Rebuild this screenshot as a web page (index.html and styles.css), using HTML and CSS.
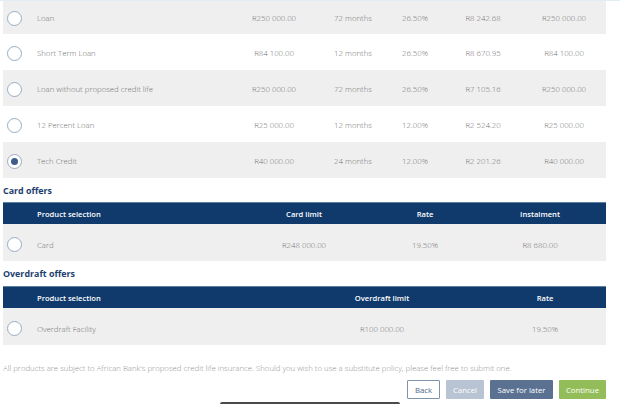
FILE: index.html
```html
<!DOCTYPE html>
<html>
<head>
<meta charset="utf-8">
<link rel="stylesheet" href="styles.css">
</head>
<body>
<div class="page">
  <div class="offers loan">
    <div class="row grey first"><span class="radio"></span><span class="name">Loan</span><span>R250 000.00</span><span>72 months</span><span>26.50%</span><span>R8 242.68</span><span>R250 000.00</span></div>
    <div class="row"><span class="radio"></span><span class="name">Short Term Loan</span><span>R84 100.00</span><span>12 months</span><span>26.50%</span><span>R8 670.95</span><span>R84 100.00</span></div>
    <div class="row grey"><span class="radio"></span><span class="name">Loan without proposed credit life</span><span>R250 000.00</span><span>72 months</span><span>26.50%</span><span>R7 105.16</span><span>R250 000.00</span></div>
    <div class="row"><span class="radio"></span><span class="name">12 Percent Loan</span><span>R25 000.00</span><span>12 months</span><span>12.00%</span><span>R2 524.20</span><span>R25 000.00</span></div>
    <div class="row grey"><span class="radio checked"></span><span class="name">Tech Credit</span><span>R40 000.00</span><span>24 months</span><span>12.00%</span><span>R2 201.26</span><span>R40 000.00</span></div>
  </div>

  <h2 class="section">Card offers</h2>
  <div class="offers card">
    <div class="row head"><span></span><span class="name">Product selection</span><span>Card limit</span><span>Rate</span><span>Instalment</span></div>
    <div class="row grey body"><span class="radio"></span><span class="name">Card</span><span>R248 000.00</span><span>19.50%</span><span>R8 680.00</span></div>
  </div>

  <h2 class="section second">Overdraft offers</h2>
  <div class="offers overdraft">
    <div class="row head"><span></span><span class="name">Product selection</span><span>Overdraft limit</span><span></span><span>Rate</span></div>
    <div class="row grey body"><span class="radio"></span><span class="name">Overdraft Facility</span><span>R100 000.00</span><span></span><span>19.50%</span></div>
  </div>

  <p class="note">All products are subject to African Bank's proposed credit life insurance. Should you wish to use a substitute policy, please feel free to submit one.</p>

  <div class="actions">
    <button class="btn back">Back</button>
    <button class="btn cancel">Cancel</button>
    <button class="btn save">Save for later</button>
    <button class="btn continue">Continue</button>
  </div>
  <div class="handle"></div>
</div>
</body>
</html>
```

FILE: styles.css
```css
* { box-sizing: border-box; }
html, body { margin: 0; padding: 0; background: #fff; }
body {
  font-family: "Open Sans", "Liberation Sans", sans-serif;
  border-top: 1px solid #e2edf4;
  overflow: hidden;
  height: 404px;
}
.page {
  width: 606px;
  padding-left: 3px;
}
.row {
  display: grid;
  align-items: center;
  height: 36px;
  padding-top: 2px;
  font-size: 7.8px;
  font-weight: 300;
  color: #707070;
  text-align: center;
}
.row.grey { background: #efefef; }
.row.first { height: 33px; padding-top: 1px; }
.row .name { text-align: left; }
.loan .row { grid-template-columns: 34px 199px 76px 82px 42px 94px 68px 8px; }
.card .row { grid-template-columns: 34px 217px 100px 142px 88px 22px; }
.overdraft .row { grid-template-columns: 34px 285px 120px 42px 122px; }
.row.head {
  height: 22px;
  padding-top: 0;
  background: #0f3a6b;
  color: #fff;
  font-weight: 600;
  font-size: 7.6px;
  border-top: 1px solid #5d7ea3;
}
.row.body { height: 37px; padding-top: 4px; }
.radio {
  display: block;
  width: 15px;
  height: 15px;
  margin-left: 4px;
  border: 1px solid #9aabc2;
  border-radius: 50%;
  background: #fff;
  position: relative;
}
.radio.checked::after {
  content: "";
  position: absolute;
  left: 3px;
  top: 3px;
  width: 7px;
  height: 7px;
  border-radius: 50%;
  background: #3f5c8c;
}
.section {
  margin: 0;
  height: 24px;
  line-height: 25px;
  font-size: 8.9px;
  font-weight: 700;
  color: #1b3e6e;
}
.section.second { height: 25px; line-height: 26px; }
.note {
  margin: 18px 0 0;
  font-size: 7.8px;
  font-weight: 300;
  line-height: 10px;
  color: #939393;
}
.actions {
  display: flex;
  justify-content: flex-end;
  gap: 6px;
  margin-top: 7px;
}
.btn {
  height: 19px;
  border: 1px solid transparent;
  font-family: "Open Sans", "Liberation Sans", sans-serif;
  font-size: 7.8px;
  color: #fff;
  padding: 0;
  border-radius: 1px;
}
.btn.back { width: 33px; background: #fff; border-color: #7f93ad; color: #4f6688; }
.btn.cancel { width: 38px; background: #b8c4d3; }
.btn.save { width: 63px; background: #5a7192; }
.btn.continue { width: 47px; background: #93bd58; }
.handle {
  margin: 3px 0 0 217px;
  width: 180px;
  height: 4px;
  background: #4a4a4a;
  border-radius: 2px 2px 0 0;
}
```
